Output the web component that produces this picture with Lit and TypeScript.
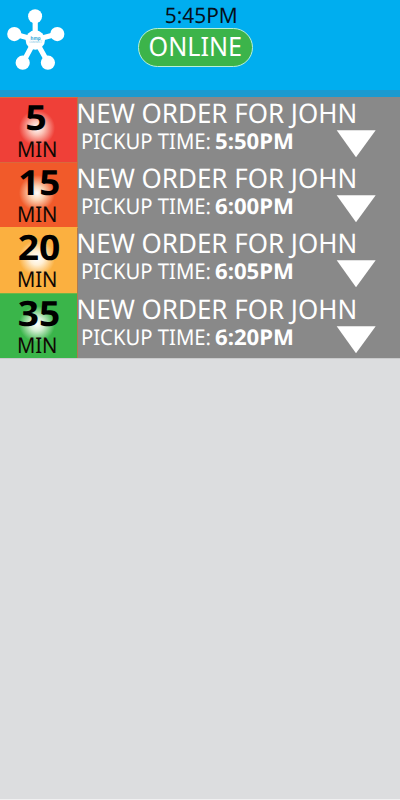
import { LitElement, html, svg, css } from "lit";
import { customElement } from "lit/decorators.js";

interface Order {
  minutes: string;
  digitsX: number;
  digitsWidth: number;
  time: string;
  tone: string;
}

const orders: Order[] = [
  { minutes: "5", digitsX: 25.2, digitsWidth: 21.5, time: "5:50PM", tone: "red" },
  { minutes: "15", digitsX: 18.2, digitsWidth: 42, time: "6:00PM", tone: "orange" },
  { minutes: "20", digitsX: 17.7, digitsWidth: 42.6, time: "6:05PM", tone: "amber" },
  { minutes: "35", digitsX: 17.7, digitsWidth: 42.5, time: "6:20PM", tone: "green" },
];

const fitted = (x: number, y: number, width: number, cls: string, text: string) =>
  svg`<text class=${cls} x=${x} y=${y} textLength=${width} lengthAdjust="spacingAndGlyphs">${text}</text>`;

@customElement("status-header")
export class StatusHeader extends LitElement {
  static styles = css`
    :host {
      display: flex;
      box-sizing: border-box;
      height: 97px;
      background: #00aeef;
      border-bottom: 7px solid #1b9ad0;
      font-family: "Noto Sans", "Open Sans", sans-serif;
    }
    .side { width: 80px; }
    svg { display: block; }
    text { text-rendering: geometricPrecision; }
    .center { width: 115px; margin-left: 58px; }
    .clock { fill: #06101a; font-size: 21.3px; }
    .pill {
      box-sizing: border-box;
      width: 115px;
      height: 39px;
      border: 1px solid #b9f0d8;
      border-radius: 20px;
      background: #3cb44a;
    }
    .online { fill: #fff; font-size: 26.5px; }
    .brand { fill: #2ba6d6; font-size: 5px; font-weight: 700; }
    .tag { fill: #6cc3e4; font-size: 3px; }
  `;
  render() {
    return html`
      <div class="side">
        <svg width="80" height="90" viewBox="0 0 80 90">
          <path
            d="M35.2 39.8V16.5M35.2 39.8L14 34M35.2 39.8L57.5 34M35.2 39.8L23 62.5M35.2 39.8L48 62.5"
            fill="none" stroke="#fff" stroke-width="5.2" />
          <g fill="#fff">
            <circle cx="35.3" cy="40" r="9.7" />
            <circle cx="35.1" cy="16.2" r="7" />
            <circle cx="14.3" cy="34.1" r="7.1" />
            <circle cx="57.3" cy="34.1" r="7.1" />
            <circle cx="22.7" cy="62.7" r="7.1" />
            <circle cx="47.9" cy="62.7" r="7.1" />
          </g>
          ${fitted(30.5, 39.8, 10, "brand", "hmp")}
          ${fitted(29.3, 43.4, 12.8, "tag", "CONNECT")}
        </svg>
      </div>
      <div class="center">
        <svg width="115" height="28" viewBox="0 0 115 28">
          ${fitted(26.8, 23, 73, "clock", "5:45PM")}
        </svg>
        <div class="pill">
          <svg width="113" height="37" viewBox="0 0 113 37">
            ${fitted(9.6, 26.6, 93.5, "online", "ONLINE")}
          </svg>
        </div>
      </div>
    `;
  }
}

@customElement("order-row")
export class OrderRow extends LitElement {
  static properties = { order: { attribute: false } };
  declare order: Order;
  static styles = css`
    :host {
      display: flex;
      height: 65px;
      background: #898989;
      font-family: "Noto Sans", "Open Sans", sans-serif;
    }
    svg { display: block; overflow: visible; }
    text { text-rendering: geometricPrecision; }
    .badge {
      box-sizing: border-box;
      width: 77.5px;
      border-right: 1px solid #b0794e;
      border-top: 1px solid #d9693c;
    }
    .detail { margin-left: -0.5px; }
    .red { background: radial-gradient(circle at 37px 30px, #fff 0, #fbc4b8 7px, #ef403800 18px), #ef4038; }
    .orange { background: radial-gradient(circle at 37px 30px, #fff 0, #fcd5b5 7px, #f15a2a00 18px), #f15a2a; }
    .amber { background: radial-gradient(circle at 37px 30px, #fff 0, #fff0d6 7px, #fbb04000 18px), #fbb040; border-top-color: #fbb040; }
    .green { background: radial-gradient(circle at 37px 30px, #fff 0, #d3efd2 7px, #3ab54a00 18px), #3ab54a; border-top-color: #6db648; }
    .digits { font-size: 34.8px; font-weight: 700; fill: #000; }
    .unit { font-size: 21.6px; fill: #100804; }
    .title { font-size: 27px; fill: #fff; }
    .pickup { font-size: 21.6px; fill: #fff; }
    .time { font-size: 21.6px; font-weight: 700; fill: #fff; }
  `;
  render() {
    const o = this.order;
    return html`
      <div class="badge ${o.tone}">
        <svg width="76" height="64" viewBox="0 1 76 64">
          ${fitted(o.digitsX, 33, o.digitsWidth, "digits", o.minutes)}
          ${fitted(16.9, 59.5, 40.6, "unit", "MIN")}
        </svg>
      </div>
      <svg class="detail" width="323" height="65" viewBox="77 0 323 65">
        ${fitted(76.5, 25.6, 280.7, "title", "NEW ORDER FOR JOHN")}
        ${fitted(81, 52.4, 130, "pickup", "PICKUP TIME:")}
        ${fitted(215, 52.4, 79, "time", o.time)}
        <path d="M336.7 33.3H375.7L356 60.3Z" fill="#fff" />
      </svg>
    `;
  }
}

@customElement("app-root")
export class AppRoot extends LitElement {
  static styles = css`
    :host {
      display: flex;
      flex-direction: column;
      box-sizing: border-box;
      height: 800px;
      background: #dcdddf;
      border-bottom: 1px solid #f0f0f1;
      overflow: hidden;
    }
    .list { border-bottom: 1px solid #c9cacb; }
    .list > :nth-child(3) { height: 66px; }
  `;
  render() {
    return html`
      <status-header></status-header>
      <div class="list">${orders.map((o) => html`<order-row .order=${o}></order-row>`)}</div>
    `;
  }
}
